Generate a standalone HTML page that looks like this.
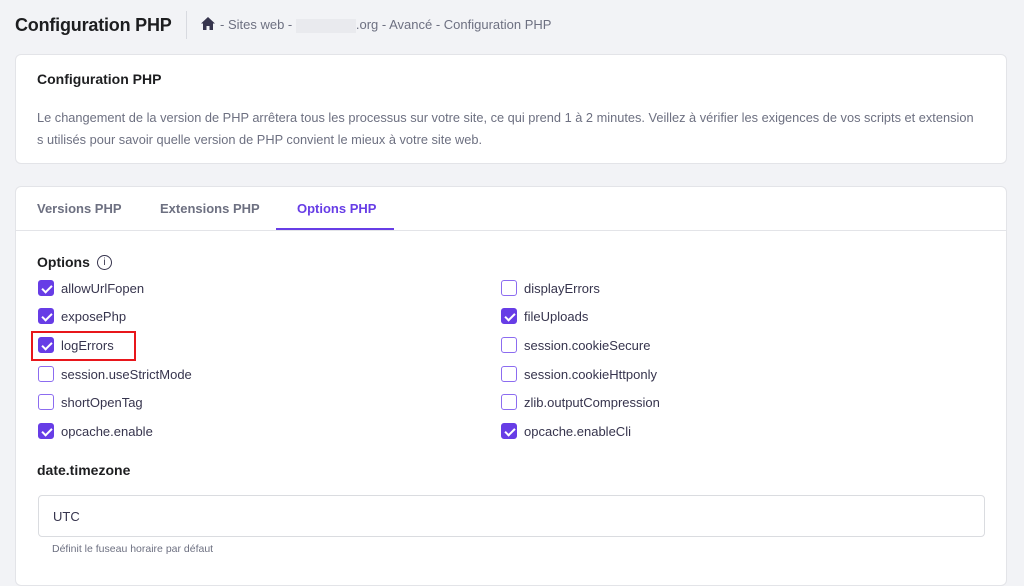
<!DOCTYPE html>
<html><head><meta charset="utf-8"><style>
*{box-sizing:border-box;margin:0;padding:0}
body{width:1024px;height:569px;overflow:hidden;background:#f2f3f6;font-family:"Liberation Sans",sans-serif;color:#2f1c6a;position:relative}
.a{position:absolute;white-space:nowrap}
.card{position:absolute;background:#fff;border:1px solid #e3e4e8;border-radius:6px}
.cb{position:absolute;width:16px;height:16px;border-radius:3px;border:1.5px solid #8c6cf0;background:#fff}
.cb.on{background:#673de6;border-color:#673de6}
.cb.on::after{content:"";position:absolute;left:4.5px;top:1.5px;width:4px;height:8px;border:solid #fff;border-width:0 2px 2px 0;transform:rotate(45deg)}
.lb{position:absolute;font-size:13px;color:#36344d;white-space:nowrap}
</style></head><body>
<div class="a" style="left:15px;top:15px;font-size:18px;font-weight:bold;color:#1d1e20;letter-spacing:-0.2px">Configuration PHP</div>
<div class="a" style="left:186px;top:11px;width:1px;height:28px;background:#d8dae0"></div>
<svg class="a" style="left:201px;top:17px" width="14" height="13" viewBox="0 0 14 13"><path d="M7 0L0 6.5h2V13h3.5V9h3v4H12V6.5h2z" fill="#36344d"/></svg>
<div class="a" style="left:220px;top:17px;font-size:13px;color:#6d7081">- Sites web - <span style="display:inline-block;width:60px;height:14px;background:#e9eaee;vertical-align:middle"></span>.org - Avancé - Configuration PHP</div>

<div class="card" style="left:15px;top:54px;width:992px;height:110px"></div>
<div class="a" style="left:37px;top:71px;font-size:14px;font-weight:bold;color:#1d1e20">Configuration PHP</div>
<div class="a" style="left:37px;top:107px;font-size:12.8px;line-height:22px;color:#6d7081">Le changement de la version de PHP arrêtera tous les processus sur votre site, ce qui prend 1 à 2 minutes. Veillez à vérifier les exigences de vos scripts et extension<br>s utilisés pour savoir quelle version de PHP convient le mieux à votre site web.</div>

<div class="card" style="left:15px;top:186px;width:992px;height:400px"></div>
<div class="a" style="left:16px;top:230px;width:990px;height:1px;background:#e3e4e8"></div>
<div class="a" style="left:37px;top:201px;font-size:13px;font-weight:bold;color:#6d7081">Versions PHP</div>
<div class="a" style="left:160px;top:201px;font-size:13px;font-weight:bold;color:#6d7081">Extensions PHP</div>
<div class="a" style="left:297px;top:201px;font-size:13px;font-weight:bold;color:#673de6">Options PHP</div>
<div class="a" style="left:276px;top:228px;width:118px;height:2px;background:#673de6"></div>

<div class="a" style="left:37px;top:254px;font-size:14px;font-weight:bold;color:#1d1e20">Options</div>
<div class="a" style="left:97px;top:255px;width:15px;height:15px;border:1.3px solid #36344d;border-radius:50%;font-size:10px;text-align:center;line-height:13px;color:#36344d">i</div>

<div class="cb on" style="left:38px;top:280px"></div><div class="lb" style="left:61px;top:281px">allowUrlFopen</div>
<div class="cb on" style="left:38px;top:308px"></div><div class="lb" style="left:61px;top:309px">exposePhp</div>
<div class="cb on" style="left:38px;top:337px"></div><div class="lb" style="left:61px;top:338px">logErrors</div>
<div class="a" style="left:31px;top:331px;width:105px;height:30px;border:2px solid #e8161b"></div>
<div class="cb" style="left:38px;top:366px"></div><div class="lb" style="left:61px;top:367px">session.useStrictMode</div>
<div class="cb" style="left:38px;top:394px"></div><div class="lb" style="left:61px;top:395px">shortOpenTag</div>
<div class="cb on" style="left:38px;top:423px"></div><div class="lb" style="left:61px;top:424px">opcache.enable</div>

<div class="cb" style="left:501px;top:280px"></div><div class="lb" style="left:524px;top:281px">displayErrors</div>
<div class="cb on" style="left:501px;top:308px"></div><div class="lb" style="left:524px;top:309px">fileUploads</div>
<div class="cb" style="left:501px;top:337px"></div><div class="lb" style="left:524px;top:338px">session.cookieSecure</div>
<div class="cb" style="left:501px;top:366px"></div><div class="lb" style="left:524px;top:367px">session.cookieHttponly</div>
<div class="cb" style="left:501px;top:394px"></div><div class="lb" style="left:524px;top:395px">zlib.outputCompression</div>
<div class="cb on" style="left:501px;top:423px"></div><div class="lb" style="left:524px;top:424px">opcache.enableCli</div>

<div class="a" style="left:37px;top:462px;font-size:14px;font-weight:bold;color:#1d1e20">date.timezone</div>
<div class="a" style="left:38px;top:495px;width:947px;height:42px;border:1px solid #dadce0;border-radius:4px;background:#fff"></div>
<div class="a" style="left:53px;top:509px;font-size:13px;color:#36344d">UTC</div>
<div class="a" style="left:52px;top:543px;font-size:10.5px;color:#6d7081">Définit le fuseau horaire par défaut</div>
</body></html>
